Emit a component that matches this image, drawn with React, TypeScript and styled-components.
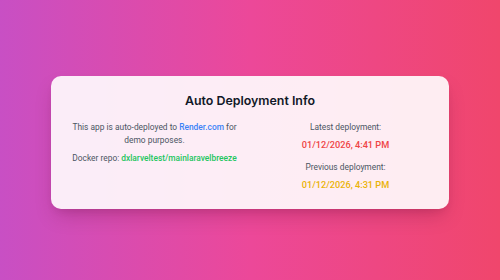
import React from "react";
import styled, { createGlobalStyle } from "styled-components";

const Global = createGlobalStyle`
  html, body { margin: 0; padding: 0; }
  body { font-family: Roboto, Inter, "Noto Sans", sans-serif; }
  * { box-sizing: border-box; }
`;

const Page = styled.div`
  min-height: 280px;
  width: 500px;
  display: flex;
  align-items: center;
  justify-content: center;
  background: linear-gradient(to right, #c84fc4 0%, #ec4899 50%, #f0466c 100%);
`;

const Card = styled.div`
  width: 398px;
  margin-top: 4px;
  padding: 16px 20px 17px;
  border-radius: 10px;
  background: rgba(255, 255, 255, 0.9);
  box-shadow: 0 10px 20px -5px rgba(80, 0, 40, 0.25), 0 4px 8px -4px rgba(80, 0, 40, 0.15);
`;

const Title = styled.h1`
  margin: 0 0 12px;
  text-align: center;
  font-family: Inter, "Noto Sans", sans-serif;
  font-size: 12.4px;
  line-height: 17px;
  font-weight: 600;
  color: #111827;
`;

const Columns = styled.div`
  display: grid;
  grid-template-columns: 1fr 1fr;
  column-gap: 24px;
`;

const Column = styled.div`
  display: flex;
  flex-direction: column;
  align-items: center;
  text-align: center;
  min-width: 0;
`;

const Text = styled.p<{ $gap?: number; $nowrap?: boolean }>`
  margin: ${(p) => p.$gap ?? 0}px 0 0;
  font-size: 8.4px;
  line-height: 13px;
  color: #4b5563;
  white-space: ${(p) => (p.$nowrap ? "nowrap" : "normal")};
`;

const Link = styled.span<{ $color: string; $weight?: number }>`
  color: ${(p) => p.$color};
  font-weight: ${(p) => p.$weight ?? 400};
`;

const DateText = styled.p<{ $color: string }>`
  margin: 4px 0 0;
  font-size: 9.2px;
  line-height: 14px;
  font-weight: 500;
  color: ${(p) => p.$color};
`;

export default function App() {
  return (
    <>
      <Global />
      <Page>
        <Card>
          <Title>Auto Deployment Info</Title>
          <Columns>
            <Column>
              <Text>
                This app is auto-deployed to <Link $color="#3b82f6" $weight={500}>Render.com</Link> for demo purposes.
              </Text>
              <Text $gap={5} $nowrap>
                Docker repo: <Link $color="#22c55e" $weight={500}>dxlarveltest/mainlaravelbreeze</Link>
              </Text>
            </Column>
            <Column>
              <Text>Latest deployment:</Text>
              <DateText $color="#ef4444">01/12/2026, 4:41 PM</DateText>
              <Text $gap={9}>Previous deployment:</Text>
              <DateText $color="#eab308">01/12/2026, 4:31 PM</DateText>
            </Column>
          </Columns>
        </Card>
      </Page>
    </>
  );
}
